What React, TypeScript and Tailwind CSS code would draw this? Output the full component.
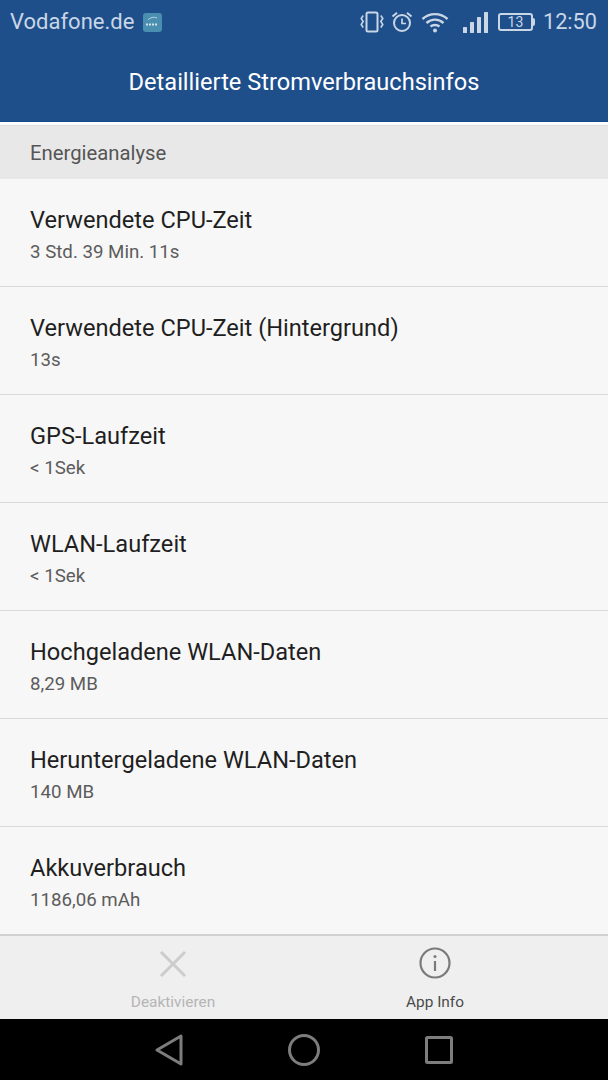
const rows = [
  { title: 'Verwendete CPU-Zeit', value: '3 Std. 39 Min. 11s' },
  { title: 'Verwendete CPU-Zeit (Hintergrund)', value: '13s' },
  { title: 'GPS-Laufzeit', value: '< 1Sek' },
  { title: 'WLAN-Laufzeit', value: '< 1Sek' },
  { title: 'Hochgeladene WLAN-Daten', value: '8,29 MB' },
  { title: 'Heruntergeladene WLAN-Daten', value: '140 MB' },
  { title: 'Akkuverbrauch', value: '1186,06 mAh' },
];

function StatusIcons() {
  return (
    <div className="flex items-center text-[#c9d6e6]">
      {/* vibrate */}
      <svg width="24" height="22" viewBox="0 0 24 22" fill="none" stroke="currentColor" className="mr-[7px]">
        <rect x="6.5" y="1.5" width="11" height="19" rx="1.5" strokeWidth="2" />
        <path d="M3.2 4.5 L1.2 7.5 L3.2 10.5 L1.2 13.5 L3.2 16.5 M20.8 4.5 L22.8 7.5 L20.8 10.5 L22.8 13.5 L20.8 16.5" strokeWidth="1.6" />
      </svg>
      {/* alarm */}
      <svg width="22" height="22" viewBox="0 0 22 22" fill="none" stroke="currentColor" className="mr-[8px]">
        <circle cx="11" cy="12" r="8" strokeWidth="2" />
        <path d="M11 7.5 V12.5 H15" strokeWidth="1.7" />
        <path d="M1.5 5.5 L6 1.8 M20.5 5.5 L16 1.8" strokeWidth="2" />
      </svg>
      {/* wifi */}
      <svg width="28" height="22" viewBox="0 0 28 22" fill="none" stroke="currentColor" strokeWidth="2.4" className="mr-[14px]">
        <path d="M1.5 8 C8.5 1.5 19.5 1.5 26.5 8" />
        <path d="M5.5 12 C10.5 7.5 17.5 7.5 22.5 12" />
        <path d="M9.5 15.5 C12 13.5 16 13.5 18.5 15.5" />
        <circle cx="14" cy="19.5" r="2" fill="currentColor" stroke="none" />
      </svg>
      {/* signal */}
      <svg width="25" height="22" viewBox="0 0 25 22" fill="currentColor" className="mr-[10px]">
        <rect x="0" y="16" width="4" height="6" rx="0.5" />
        <rect x="7" y="11" width="4" height="11" rx="0.5" />
        <rect x="14" y="6" width="4" height="16" rx="0.5" />
        <rect x="21" y="1" width="4" height="21" rx="0.5" />
      </svg>
      {/* battery */}
      <div className="mr-[8px] flex items-center">
        <div className="flex h-[18px] w-[35px] items-center justify-center rounded-[3px] border-2 border-[#c9d6e6] text-[14px] leading-none">
          13
        </div>
        <div className="h-[8px] w-[2px] rounded-r-sm bg-[#c9d6e6]" />
      </div>
      <span className="text-[21.7px] leading-none">12:50</span>
    </div>
  );
}

export default function App() {
  return (
    <div className="flex h-[1080px] w-[608px] flex-col overflow-hidden bg-[#f7f7f7] font-['Roboto',sans-serif]">
      {/* Header */}
      <div className="h-[122px] shrink-0 border-b border-[#174a8c] bg-[#1f4f8b]">
        <div className="flex h-[44px] items-center justify-between pl-[10px] pr-[11px]">
          <div className="flex items-center">
            <span className="text-[22px] leading-none text-[#c9d6e6]">Vodafone.de</span>
            <div className="ml-[9px] h-[19px] w-[19px] rounded-[3px] bg-[#4a8fb0]">
              <svg width="19" height="19" viewBox="0 0 19 19" fill="none" stroke="#d5e2ea" strokeWidth="0.8">
                <path d="M5 7 C7 4.5 11 3.5 14 5" />
                <path d="M3 11.5 H15" strokeWidth="2" strokeDasharray="2 1" />
              </svg>
            </div>
          </div>
          <StatusIcons />
        </div>
        <div className="mt-[6px] h-[64px] text-center text-[23.6px] leading-[64px] text-white">
          Detaillierte Stromverbrauchsinfos
        </div>
      </div>

      <div className="h-[3px] shrink-0 bg-white" />

      {/* Section heading */}
      <div className="flex h-[54px] shrink-0 items-center border-t border-[#dedede] bg-[#e8e8e8] pl-[30px] pt-[1px] text-[20.3px] text-[#555555]">
        Energieanalyse
      </div>

      {/* Rows */}
      <div className="min-h-0 flex-1">
        {rows.map((row, i) => (
          <div
            key={row.title}
            className={`h-[108px] pl-[30px] pt-[26px] ${i < rows.length - 1 ? 'border-b border-[#d9d9d9]' : ''}`}
          >
            <div className="text-[23.6px] leading-[30px] text-[#1f1f1f]">{row.title}</div>
            <div className="mt-[4px] text-[18.7px] leading-[26px] text-[#5c5c5c]">{row.value}</div>
          </div>
        ))}
      </div>

      {/* Bottom actions */}
      <div className="z-10 grid h-[85px] shrink-0 grid-cols-2 border-t-2 border-[#d2d2d2] bg-[#efefef] px-[42px]">
        <div className="flex flex-col items-center pt-[13px]">
          <svg width="30" height="30" viewBox="0 0 30 30" fill="none" stroke="#cccccc" strokeWidth="3">
            <path d="M3 3 L27 27 M27 3 L3 27" />
          </svg>
          <span className="mt-[13px] text-[15.4px] leading-[20px] text-[#b5b5b5]">Deaktivieren</span>
        </div>
        <div className="flex flex-col items-center pt-[11px]">
          <svg width="32" height="32" viewBox="0 0 32 32" fill="none" stroke="#7a7a7a" strokeWidth="2.2">
            <circle cx="16" cy="16" r="14.5" />
            <path d="M16 14 V24" />
            <circle cx="16" cy="9.5" r="1.5" fill="#7a7a7a" stroke="none" />
          </svg>
          <span className="mt-[13px] text-[15.4px] leading-[20px] text-[#4a4a4a]">App Info</span>
        </div>
      </div>

      {/* Navigation bar */}
      <div className="flex h-[61px] shrink-0 items-center justify-center bg-black">
        <div className="flex w-[298px] items-center justify-between">
          <svg width="28" height="32" viewBox="0 0 28 32" fill="none" stroke="#7d7d7d" strokeWidth="3" strokeLinejoin="round">
            <path d="M26 2 V30 L2 16 Z" />
          </svg>
          <svg width="32" height="32" viewBox="0 0 32 32" fill="none" stroke="#7d7d7d" strokeWidth="3">
            <circle cx="16" cy="16" r="14.5" />
          </svg>
          <svg width="28" height="28" viewBox="0 0 28 28" fill="none" stroke="#7d7d7d" strokeWidth="3" strokeLinejoin="round">
            <rect x="1.5" y="1.5" width="25" height="25" rx="1" />
          </svg>
        </div>
      </div>
    </div>
  );
}
